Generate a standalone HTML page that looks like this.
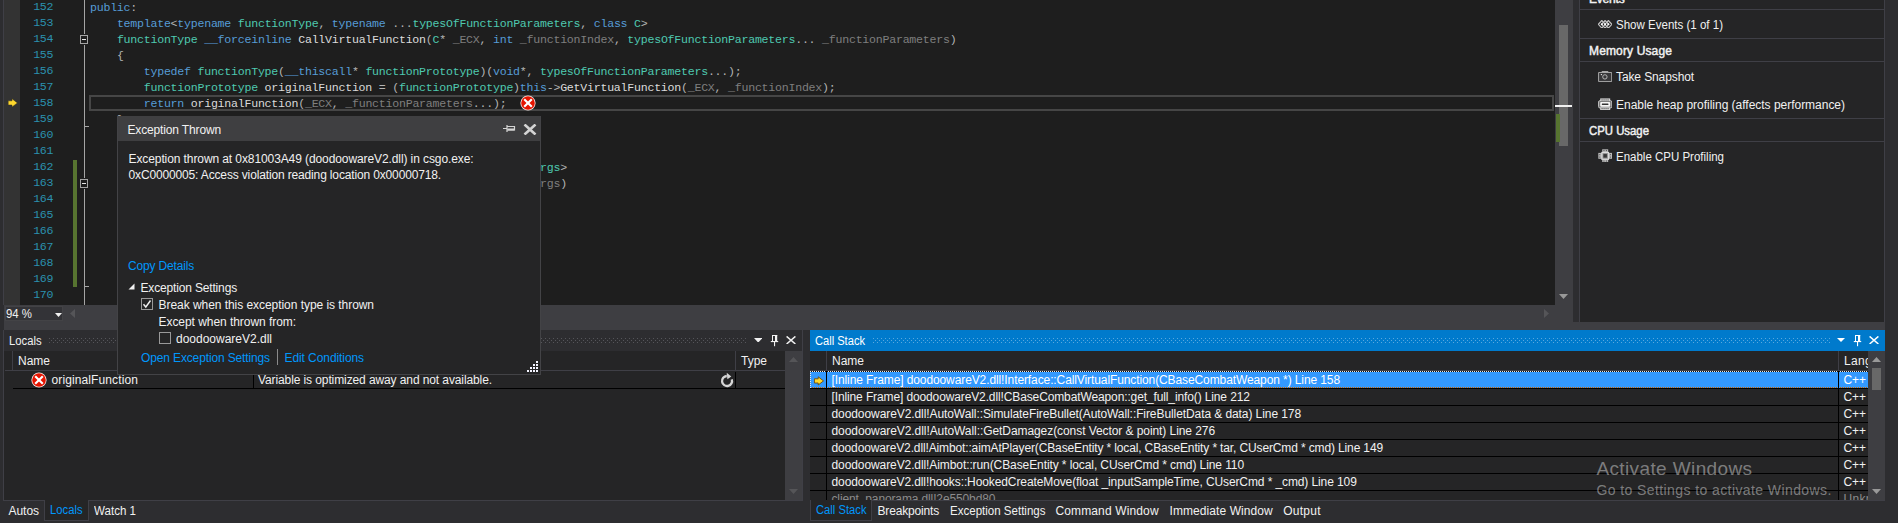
<!DOCTYPE html>
<html lang="en">
<head>
<meta charset="utf-8">
<title>Visual Studio - Exception Thrown</title>
<style>
html,body{margin:0;padding:0}
body{width:1898px;height:523px;overflow:hidden;background:#2d2d30;position:relative;font-family:"Liberation Sans", sans-serif;font-size:12px;color:#f1f1f1;-webkit-font-smoothing:antialiased}
div,span,svg{position:absolute;box-sizing:border-box}
.t{white-space:pre;line-height:1;height:1em}
.b{-webkit-text-stroke:.45px #f1f1f1}
#editor{left:4px;top:0;width:1551px;height:305px;background:#1e1e1e;overflow:hidden}
#margin{left:0;top:0;width:16px;height:305px;background:#333333}
.ln{left:0;width:49.3px;text-align:right;color:#2b91af;font-family:"Liberation Mono", monospace;font-size:11.6px;line-height:16px;height:16px;white-space:pre;letter-spacing:-0.2425px}
.cl{left:86px;font-family:"Liberation Mono", monospace;font-size:11.6px;line-height:16px;height:16px;white-space:pre;color:#dcdcdc;letter-spacing:-0.2425px}
.cl span{position:static}
.k{color:#569cd6}.y{color:#4ec9b0}.p{color:#7f7f7f}.o{color:#b4b4b4}.v{color:#dadada}
.sep{background:#3f3f46;height:1px}
.bl{background:#000}
.csrow{left:0;height:17px;width:1058px}
</style>
</head>
<body>
<div id="editor">
<div id="margin"></div>
<div style="left:69px;top:160px;width:4px;height:127px;background:#577430"></div>
<div style="left:80px;top:0;width:1px;height:305px;background:#a5a5a5"></div>
<div style="left:80px;top:126px;width:5px;height:1px;background:#a5a5a5"></div>
<div style="left:80px;top:286px;width:5px;height:1px;background:#a5a5a5"></div>
<div style="left:75.9px;top:34.0px;width:8.4px;height:11.2px;background:#1e1e1e"></div><div style="left:75.9px;top:35px;width:8.4px;height:9.2px;border:1px solid #a5a5a5;background:#1e1e1e"><div style="left:1.2px;top:3px;width:4px;height:1.2px;background:#e6e6e6"></div></div>
<div style="left:75.9px;top:178.0px;width:8.4px;height:11.2px;background:#1e1e1e"></div><div style="left:75.9px;top:179px;width:8.4px;height:9.2px;border:1px solid #a5a5a5;background:#1e1e1e"><div style="left:1.2px;top:3px;width:4px;height:1.2px;background:#e6e6e6"></div></div>
<div style="left:85px;top:95px;width:1465px;height:16px;border:2px solid #464646"></div>
<div class="ln" style="top:-1px">152</div><div class="cl" style="top:0px"><span class="k">public</span><span class="o">:</span></div>
<div class="ln" style="top:15px">153</div><div class="cl" style="top:16px">    <span class="k">template</span><span class="o">&lt;</span><span class="k">typename</span> <span class="y">functionType</span><span class="o">,</span> <span class="k">typename</span> <span class="o">...</span><span class="y">typesOfFunctionParameters</span><span class="o">,</span> <span class="k">class</span> <span class="y">C</span><span class="o">&gt;</span></div>
<div class="ln" style="top:31px">154</div><div class="cl" style="top:32px">    <span class="y">functionType</span> <span class="k">__forceinline</span> CallVirtualFunction<span class="o">(</span><span class="y">C</span><span class="o">*</span> <span class="p">_ECX</span><span class="o">,</span> <span class="k">int</span> <span class="p">_functionIndex</span><span class="o">,</span> <span class="y">typesOfFunctionParameters</span><span class="o">...</span> <span class="p">_functionParameters</span><span class="o">)</span></div>
<div class="ln" style="top:47px">155</div><div class="cl" style="top:48px">    <span class="o">{</span></div>
<div class="ln" style="top:63px">156</div><div class="cl" style="top:64px">        <span class="k">typedef</span> <span class="y">functionType</span><span class="o">(</span><span class="k">__thiscall</span><span class="o">*</span> <span class="y">functionPrototype</span><span class="o">)(</span><span class="k">void</span><span class="o">*,</span> <span class="y">typesOfFunctionParameters</span><span class="o">...);</span></div>
<div class="ln" style="top:79px">157</div><div class="cl" style="top:80px">        <span class="y">functionPrototype</span> <span class="v">originalFunction</span> <span class="o">=</span> <span class="o">(</span><span class="y">functionPrototype</span><span class="o">)</span><span class="k">this</span><span class="o">-&gt;</span>GetVirtualFunction<span class="o">(</span><span class="p">_ECX</span><span class="o">,</span> <span class="p">_functionIndex</span><span class="o">);</span></div>
<div class="ln" style="top:95px">158</div><div class="cl" style="top:96px">        <span class="k">return</span> <span class="v">originalFunction</span><span class="o">(</span><span class="p">_ECX</span><span class="o">,</span> <span class="p">_functionParameters</span><span class="o">...);</span></div>
<div class="ln" style="top:111px">159</div><div class="cl" style="top:112px">    <span class="o">}</span></div>
<div class="ln" style="top:127px">160</div>
<div class="ln" style="top:143px">161</div>
<div class="ln" style="top:159px">162</div><div class="cl" style="top:160px">    <span class="k">template</span><span class="o">&lt;</span><span class="k">typename</span> <span class="y">functionType</span><span class="o">,</span> <span class="k">class</span> <span class="y">C</span><span class="o">,</span> <span class="k">typename</span> <span class="o">...</span><span class="y">typesOfMyArgs</span><span class="o">&gt;</span></div>
<div class="ln" style="top:175px">163</div><div class="cl" style="top:176px">    <span class="y">functionType</span> CallVirtualFunctionEx<span class="o">(</span><span class="y">C</span><span class="o">*</span> <span class="p">_ECX</span><span class="o">,</span> <span class="y">typesOfMyArgs</span><span class="o">...</span> <span class="p">_args</span><span class="o">)</span></div>
<div class="ln" style="top:191px">164</div><div class="cl" style="top:192px">    <span class="o">{</span></div>
<div class="ln" style="top:207px">165</div>
<div class="ln" style="top:223px">166</div>
<div class="ln" style="top:239px">167</div>
<div class="ln" style="top:255px">168</div>
<div class="ln" style="top:271px">169</div><div class="cl" style="top:272px">    <span class="o">}</span></div>
<div class="ln" style="top:287px">170</div>
<svg style="left:3.8px;top:98px" width="10" height="10" viewBox="0 0 10 10"><path d="M0.2 2.8H4V0.7L9.4 4.9L4 9.1V7H0.2Z" fill="#ffd82e" stroke="#3a3620" stroke-width=".5"/></svg>
<svg style="left:516px;top:95.2px" width="16" height="16" viewBox="0 0 16 16"><circle cx="8" cy="8" r="7.6" fill="#f8ecea"/><circle cx="8" cy="8" r="6.8" fill="#e51400"/><path d="M4.2 4.2L11.8 11.8M11.8 4.2L4.2 11.8" stroke="#ffffff" stroke-width="2.1" fill="none"/></svg>
</div>
<div style="left:3px;top:0;width:1px;height:305px;background:#3f3f46"></div>
<div id="vscroll" style="left:1555px;top:0;width:18px;height:305px;background:#3e3e42"><div style="left:4px;top:25px;width:9px;height:121px;background:#686868"></div><div style="left:1px;top:114px;width:4px;height:28px;background:#577430"></div><div style="left:0;top:105px;width:17px;height:2px;background:#f0f0f0"></div><svg style="left:4px;top:294px" width="9" height="5" viewBox="0 0 9 5"><path d="M0 0H9L4.5 5Z" fill="#999"/></svg></div>
<div id="hscroll" style="left:4px;top:305px;width:1569px;height:17px;background:#3e3e42"><div style="left:1px;top:1px;width:58px;height:15px;background:#333337;border:1px solid #434346"></div><svg style="left:51px;top:8px" width="7" height="4" viewBox="0 0 7 4"><path d="M0 0H7L3.5 4Z" fill="#f1f1f1"/></svg><svg style="left:66px;top:4px" width="5" height="9" viewBox="0 0 5 9"><path d="M5 0V9L0 4.5Z" fill="#555558"/></svg><svg style="left:1540px;top:4px" width="5" height="9" viewBox="0 0 5 9"><path d="M0 0V9L5 4.5Z" fill="#555558"/></svg></div>
<div style="left:4px;top:322px;width:1881px;height:8px;background:#3e3e42"></div>
<div id="diag" style="left:1579px;top:0;width:306px;height:322px;background:#252526;border-left:1px solid #3f3f46;border-right:1px solid #3f3f46"><div class="sep" style="left:0;top:9px;width:305px"></div><div class="sep" style="left:0;top:38px;width:305px"></div><div class="sep" style="left:0;top:61px;width:305px"></div><div class="sep" style="left:0;top:118px;width:305px"></div><div class="sep" style="left:0;top:141px;width:305px"></div></div>
<svg style="left:1597.7px;top:19.6px" width="14.2" height="8.6" viewBox="0 0 14.2 8.6" fill="none" stroke="#c4c4c4" stroke-width="1.2"><path d="M0.3 4.3L3.8 0.5L7.3 4.3L3.8 8.1Z"/><path d="M3.6 4.3L7.1 0.5L10.6 4.3L7.1 8.1Z"/><path d="M6.9 4.3L10.4 0.5L13.9 4.3L10.4 8.1Z"/><circle cx="3.8" cy="4.3" r="1" fill="#ffffff" stroke="none"/><circle cx="7.1" cy="4.3" r="1" fill="#ffffff" stroke="none"/><circle cx="10.4" cy="4.3" r="1" fill="#ffffff" stroke="none"/></svg>
<svg style="left:1597.8px;top:70.6px" width="14.4" height="11.4" viewBox="0 0 14.4 11.4" fill="none" stroke="#a9a9a9" stroke-width="1"><path d="M0.6 1.5H13.7V10.6H0.6Z" fill="#38383a"/><path d="M4 1.5V0.5H10V1.5"/><circle cx="6.9" cy="5.9" r="2.2" stroke="#b4b4b4"/><circle cx="3.4" cy="3.6" r="0.7" fill="#f0f0f0" stroke="none"/></svg>
<svg style="left:1597.9px;top:97.7px" width="14.4" height="12.5" viewBox="0 0 14.4 12.5"><rect x="0.6" y="2.7" width="13.2" height="7.2" rx="1.2" fill="#707070" stroke="#c8c8c8" stroke-width="1"/><rect x="2.2" y="0.4" width="10" height="2.6" fill="#d4d4d4"/><rect x="2.2" y="9.5" width="10" height="2.6" fill="#d4d4d4"/><g fill="#3c3c3c"><rect x="3.6" y="1.3" width="0.9" height="1.3"/><rect x="3.6" y="9.9" width="0.9" height="1.3"/><rect x="5.6" y="1.3" width="0.9" height="1.3"/><rect x="5.6" y="9.9" width="0.9" height="1.3"/><rect x="7.6" y="1.3" width="0.9" height="1.3"/><rect x="7.6" y="9.9" width="0.9" height="1.3"/><rect x="9.6" y="1.3" width="0.9" height="1.3"/><rect x="9.6" y="9.9" width="0.9" height="1.3"/></g><rect x="2.2" y="3.9" width="10" height="4.8" rx="0.9" fill="#f6f6f6"/><rect x="3.8" y="5.6" width="6.7" height="1.4" rx="0.4" fill="#333333"/></svg>
<svg style="left:1597.9px;top:148.8px" width="14.4" height="13.6" viewBox="0 0 14.4 13.6"><g fill="#b9b9b9"><rect x="4.2" y="0.3" width="6" height="3"/><rect x="4.2" y="10.4" width="6" height="2.9"/><rect x="0.3" y="3.9" width="3.6" height="5.9"/><rect x="10.5" y="3.9" width="3.6" height="5.9"/></g><g fill="#4a4a4a"><rect x="5.4" y="1.2" width="1.1" height="0.9"/><rect x="7.9" y="1.2" width="1.1" height="0.9"/><rect x="5.4" y="11.6" width="1.1" height="0.9"/><rect x="7.9" y="11.6" width="1.1" height="0.9"/><rect x="1.3" y="5.2" width="1" height="1"/><rect x="1.3" y="7.6" width="1" height="1"/><rect x="11.9" y="5.2" width="1" height="1"/><rect x="11.9" y="7.6" width="1" height="1"/></g><rect x="3.3" y="2.9" width="7.8" height="8" fill="#dcdcdc"/><rect x="4.5" y="4.1" width="5.4" height="5.6" fill="#8e8e8e"/><rect x="5.4" y="5.1" width="3.5" height="3.5" fill="#363636"/></svg>
<div id="locals" style="left:3px;top:330px;width:800px;height:171px;background:#252526;border-left:1px solid #3f3f46;border-right:1px solid #3f3f46;border-bottom:1px solid #3f3f46">
<div style="left:0;top:0;width:798px;height:21px;background:#2d2d30"></div><svg style="left:45px;top:8px" width="697" height="5" shape-rendering="crispEdges"><defs><pattern id="g1" width="4" height="4" patternUnits="userSpaceOnUse"><rect x="0" y="0" width="1" height="1" fill="#55555a"/><rect x="2" y="2" width="1" height="1" fill="#55555a"/></pattern></defs><rect width="697" height="5" fill="url(#g1)"/></svg><svg style="left:749.7px;top:7.8px" width="8.4" height="4.6" viewBox="0 0 9 5" preserveAspectRatio="none"><path d="M0 0H9L4.5 5Z" fill="#f1f1f1"/></svg><svg style="left:766px;top:5px" width="9" height="12" viewBox="0 0 9 12" fill="#f1f1f1"><rect x="2" y="0" width="1" height="6"/><rect x="2" y="0" width="5.2" height="1"/><rect x="5" y="0" width="2.2" height="6"/><rect x="0.8" y="6" width="7.4" height="1.1"/><rect x="4" y="7" width="1.1" height="4.2"/></svg><svg style="left:782px;top:6px" width="10" height="8.4" viewBox="0 0 10 8.4"><path d="M0.6 0.4L9.4 8M9.4 0.4L0.6 8" stroke="#f1f1f1" stroke-width="1.5" fill="none"/></svg><div style="left:8px;top:21px;width:1px;height:19px;background:#3f3f46"></div><div style="left:731px;top:21px;width:1px;height:19px;background:#3f3f46"></div><div class="sep" style="left:1px;top:40px;width:780px"></div><div class="bl" style="left:9px;top:58px;width:772px;height:1px"></div><div class="bl" style="left:249px;top:42px;width:1px;height:16px"></div><div class="bl" style="left:731px;top:42px;width:1px;height:16px"></div><svg style="left:716px;top:42px" width="14" height="16" viewBox="0 0 14 16"><path d="M11.75 7.3A5 5 0 1 1 6.8 4" fill="none" stroke="#d6d6d6" stroke-width="2.3"/><path d="M6.7 0.7L11.3 4.4L7.4 7.2Z" fill="#d6d6d6"/></svg><div style="left:781px;top:21px;width:17px;height:149px;background:#3e3e42"><svg style="left:4px;top:6px" width="9" height="5" viewBox="0 0 9 5"><path d="M0 5H9L4.5 0Z" fill="#555558"/></svg><svg style="left:4px;top:138px" width="9" height="5" viewBox="0 0 9 5"><path d="M0 0H9L4.5 5Z" fill="#555558"/></svg></div></div>
<svg style="left:30.9px;top:371.8px" width="16" height="16" viewBox="0 0 16 16"><circle cx="8" cy="8" r="7.6" fill="#f8ecea"/><circle cx="8" cy="8" r="6.8" fill="#e51400"/><path d="M4.2 4.2L11.8 11.8M11.8 4.2L4.2 11.8" stroke="#ffffff" stroke-width="2.1" fill="none"/></svg>
<div style="left:44px;top:500px;width:45px;height:21px;background:#252526;border:1px solid #3f3f46;border-top:none"></div>
<div class="sep" style="left:89px;top:500px;width:714px"></div>
<div id="callstack" style="left:810px;top:330px;width:1075px;height:170px;background:#252526;overflow:hidden">
<div style="left:0;top:0;width:1075px;height:21px;background:#007acc"></div><svg style="left:63px;top:8px" width="958" height="5" shape-rendering="crispEdges"><defs><pattern id="g2" width="4" height="4" patternUnits="userSpaceOnUse"><rect x="0" y="0" width="1" height="1" fill="#59a8de"/><rect x="2" y="2" width="1" height="1" fill="#59a8de"/></pattern></defs><rect width="958" height="5" fill="url(#g2)"/></svg><svg style="left:1027px;top:8px" width="8" height="4" viewBox="0 0 8 4"><path d="M0 0H8L4 4Z" fill="#fff"/></svg><svg style="left:1043px;top:5px" width="9" height="12" viewBox="0 0 9 12" fill="#ffffff"><rect x="2" y="0" width="1" height="6"/><rect x="2" y="0" width="5.2" height="1"/><rect x="5" y="0" width="2.2" height="6"/><rect x="0.8" y="6" width="7.4" height="1.1"/><rect x="4" y="7" width="1.1" height="4.2"/></svg><svg style="left:1059px;top:6px" width="10" height="8.4" viewBox="0 0 10 8.4"><path d="M0.6 0.4L9.4 8M9.4 0.4L0.6 8" stroke="#ffffff" stroke-width="1.5" fill="none"/></svg><div style="left:16px;top:21px;width:1px;height:19px;background:#3f3f46"></div><div style="left:1028px;top:21px;width:1px;height:19px;background:#3f3f46"></div><div class="sep" style="left:0;top:40px;width:1058px"></div><div class="csrow" style="top:41px;background:#3399ff"></div><div style="left:0;top:41px;width:1058px;height:1px;background:repeating-linear-gradient(90deg,#e8e8e8 0 1px,#101010 1px 2px)"></div><div style="left:0;top:57px;width:1058px;height:1px;background:repeating-linear-gradient(90deg,#cc6600 0 1px,#3399ff 1px 2px)"></div><div style="left:0;top:41px;width:1px;height:17px;background:repeating-linear-gradient(180deg,#e8e8e8 0 1px,#3399ff 1px 2px)"></div><div class="bl" style="left:0;top:58px;width:1058px;height:1px"></div><div class="bl" style="left:0;top:75px;width:1058px;height:1px"></div><div class="bl" style="left:0;top:92px;width:1058px;height:1px"></div><div class="bl" style="left:0;top:109px;width:1058px;height:1px"></div><div class="bl" style="left:0;top:126px;width:1058px;height:1px"></div><div class="bl" style="left:0;top:143px;width:1058px;height:1px"></div><div class="bl" style="left:0;top:160px;width:1058px;height:1px"></div><div class="bl" style="left:0;top:177px;width:1058px;height:1px"></div><div class="bl" style="left:16px;top:41px;width:1px;height:130px"></div><div class="bl" style="left:1028px;top:41px;width:1px;height:130px"></div><svg style="left:4.2px;top:45.6px" width="10" height="10" viewBox="0 0 10 10"><path d="M0.4 2.8H4.2V0.8L9.5 4.9L4.2 9V7H0.4Z" fill="#ffd82e" stroke="#6a4a10" stroke-width=".9"/></svg><div style="left:1058px;top:21px;width:17px;height:149px;background:#3e3e42"><svg style="left:4px;top:6px" width="9" height="5" viewBox="0 0 9 5"><path d="M0 5H9L4.5 0Z" fill="#999"/></svg><div style="left:4px;top:17px;width:9px;height:22px;background:#686868"></div><svg style="left:4px;top:138px" width="9" height="5" viewBox="0 0 9 5"><path d="M0 0H9L4.5 5Z" fill="#999"/></svg></div></div>
<div class="sep" style="left:810px;top:499.5px;width:1075px"></div>
<div style="left:810px;top:500px;width:62px;height:21px;background:#252526;border:1px solid #3f3f46;border-top:none"></div>
<div id="cstext" style="left:810px;top:371px;width:1058px;height:128.5px;overflow:hidden">
<span class="t" id="cs0" style="left:21.5px;top:2.84px;color:#ffffff;letter-spacing:-0.1016px">[Inline Frame] doodoowareV2.dll!Interface::CallVirtualFunction(CBaseCombatWeapon *) Line 158</span>
<span class="t" id="cl0" style="left:1033.5px;top:2.84px;color:#ffffff;letter-spacing:-0.0625px">C++</span>
<span class="t" id="cs1" style="left:21.5px;top:19.84px;color:#f1f1f1;letter-spacing:-0.1210px">[Inline Frame] doodoowareV2.dll!CBaseCombatWeapon::get_full_info() Line 212</span>
<span class="t" id="cl1" style="left:1033.5px;top:19.84px;color:#f1f1f1;letter-spacing:-0.0625px">C++</span>
<span class="t" id="cs2" style="left:21.5px;top:36.84px;color:#f1f1f1;letter-spacing:-0.0826px">doodoowareV2.dll!AutoWall::SimulateFireBullet(AutoWall::FireBulletData &amp; data) Line 178</span>
<span class="t" id="cl2" style="left:1033.5px;top:36.84px;color:#f1f1f1;letter-spacing:-0.0625px">C++</span>
<span class="t" id="cs3" style="left:21.5px;top:53.84px;color:#f1f1f1;letter-spacing:-0.0728px">doodoowareV2.dll!AutoWall::GetDamagez(const Vector &amp; point) Line 276</span>
<span class="t" id="cl3" style="left:1033.5px;top:53.84px;color:#f1f1f1;letter-spacing:-0.0625px">C++</span>
<span class="t" id="cs4" style="left:21.5px;top:70.84px;color:#f1f1f1;letter-spacing:-0.1329px">doodoowareV2.dll!Aimbot::aimAtPlayer(CBaseEntity * local, CBaseEntity * tar, CUserCmd * cmd) Line 149</span>
<span class="t" id="cl4" style="left:1033.5px;top:70.84px;color:#f1f1f1;letter-spacing:-0.0625px">C++</span>
<span class="t" id="cs5" style="left:21.5px;top:87.84px;color:#f1f1f1;letter-spacing:-0.0921px">doodoowareV2.dll!Aimbot::run(CBaseEntity * local, CUserCmd * cmd) Line 110</span>
<span class="t" id="cl5" style="left:1033.5px;top:87.84px;color:#f1f1f1;letter-spacing:-0.0625px">C++</span>
<span class="t" id="cs6" style="left:21.5px;top:104.84px;color:#f1f1f1;letter-spacing:-0.1033px">doodoowareV2.dll!hooks::HookedCreateMove(float _inputSampleTime, CUserCmd * _cmd) Line 109</span>
<span class="t" id="cl6" style="left:1033.5px;top:104.84px;color:#f1f1f1;letter-spacing:-0.0625px">C++</span>
<span class="t" id="cs7" style="left:21.5px;top:121.84px;color:#8c8c8c;letter-spacing:-0.1265px">client_panorama.dll!2e550bd80</span>
<span class="t" id="cl7" style="left:1033.5px;top:121.84px;color:#8c8c8c;letter-spacing:0.3000px">Unkn</span>
<span class="t" id="clh" style="left:1034px;top:0.00px;letter-spacing:0.0000px"></span></div>
<div style="left:1843px;top:351px;width:25px;height:19px;overflow:hidden"><span class="t" id="lang" style="left:1px;top:3.84px;letter-spacing:0.3000px">Language</span></div>
<div id="popup" style="left:117px;top:116px;width:424px;height:259px;background:#252526;border:1px solid #434346;border-top:none"><div style="left:0;top:0;width:422px;height:25px;background:#3f3f41"></div></div>
<svg style="left:503px;top:124px" width="13" height="9" viewBox="0 0 13 9"><path d="M0 4.5H4M4 1V8M4.5 2.5H11.5V6H4.5" fill="none" stroke="#d4d4d4" stroke-width="1.2"/><path d="M4.5 5.5H11.5" stroke="#d4d4d4" stroke-width="2"/></svg>
<svg style="left:523px;top:124px" width="14" height="11" viewBox="0 0 14 11"><path d="M1.5 0.5L12.5 10.5M12.5 0.5L1.5 10.5" stroke="#d4d4d4" stroke-width="2.6" fill="none"/></svg>
<svg style="left:128.3px;top:283.4px" width="7" height="7" viewBox="0 0 7 7"><path d="M6.5 0.5V6.5H0.5Z" fill="#f1f1f1"/></svg>
<div style="left:141px;top:298px;width:12px;height:12px;border:1px solid #999;background:#252526"></div>
<svg style="left:142px;top:299px" width="10" height="10" viewBox="0 0 10 10"><path d="M1.5 5.2L3.8 8L8.5 1.5" fill="none" stroke="#f1f1f1" stroke-width="1.4"/></svg>
<div style="left:159px;top:332px;width:12px;height:12px;border:1px solid #999;background:#252526"></div>
<div style="left:276.5px;top:349px;width:1.5px;height:16px;background:#8a8a8a"></div>
<svg style="left:527px;top:361px" width="11" height="11" viewBox="0 0 11 11" fill="#f4f4ff"><rect x="9" y="0" width="2" height="2"/><rect x="9" y="3" width="2" height="2"/><rect x="6" y="3" width="2" height="2"/><rect x="9" y="6" width="2" height="2"/><rect x="6" y="6" width="2" height="2"/><rect x="3" y="6" width="2" height="2"/><rect x="9" y="9" width="2" height="2"/><rect x="6" y="9" width="2" height="2"/><rect x="3" y="9" width="2" height="2"/><rect x="0" y="9" width="2" height="2"/></svg>
<span class="t" id="pt" style="left:127.50px;top:123.84px;color:#f1f1f1;font-size:12px;letter-spacing:-0.1465px">Exception Thrown</span>
<span class="t" id="p1" style="left:128.50px;top:152.84px;color:#f1f1f1;font-size:12px;letter-spacing:-0.0950px">Exception thrown at 0x81003A49 (doodoowareV2.dll) in csgo.exe:</span>
<span class="t" id="p2" style="left:128.50px;top:168.84px;color:#f1f1f1;font-size:12px;letter-spacing:-0.1475px">0xC0000005: Access violation reading location 0x00000718.</span>
<span class="t" id="p3" style="left:128.00px;top:259.84px;color:#0097fb;font-size:12px;letter-spacing:-0.1693px">Copy Details</span>
<span class="t" id="p4" style="left:140.50px;top:281.84px;color:#f1f1f1;font-size:12px;letter-spacing:-0.1615px">Exception Settings</span>
<span class="t" id="p5" style="left:158.50px;top:298.84px;color:#f1f1f1;font-size:12px;letter-spacing:-0.0488px">Break when this exception type is thrown</span>
<span class="t" id="p6" style="left:158.50px;top:315.84px;color:#f1f1f1;font-size:12px;letter-spacing:-0.0514px">Except when thrown from:</span>
<span class="t" id="p7" style="left:176.00px;top:332.84px;color:#f1f1f1;font-size:12px;letter-spacing:-0.0049px">doodoowareV2.dll</span>
<span class="t" id="p8" style="left:141.00px;top:351.84px;color:#0097fb;font-size:12px;letter-spacing:-0.1345px">Open Exception Settings</span>
<span class="t" id="p9" style="left:284.50px;top:351.84px;color:#0097fb;font-size:12px;letter-spacing:-0.0813px">Edit Conditions</span>
<span class="t" id="z1" style="left:6.00px;top:307.84px;color:#f1f1f1;font-size:12px;transform:scaleX(0.9503);transform-origin:0 0">94 %</span>
<span class="t" id="l1" style="left:8.50px;top:334.84px;color:#f1f1f1;font-size:12px;transform:scaleX(0.9369);transform-origin:0 0">Locals</span>
<span class="t" id="l2" style="left:18.00px;top:354.84px;color:#f1f1f1;font-size:12px;letter-spacing:-0.0039px">Name</span>
<span class="t" id="l3" style="left:741.00px;top:354.84px;color:#f1f1f1;font-size:12px;letter-spacing:-0.0039px">Type</span>
<span class="t" id="l4" style="left:51.50px;top:373.84px;color:#f1f1f1;font-size:12px;letter-spacing:0.1113px">originalFunction</span>
<span class="t" id="l5" style="left:258.00px;top:373.84px;color:#f1f1f1;font-size:12px;letter-spacing:-0.1021px">Variable is optimized away and not available.</span>
<span class="t" id="t1" style="left:8.50px;top:504.84px;color:#f1f1f1;font-size:12px;letter-spacing:-0.0375px">Autos</span>
<span class="t" id="t2" style="left:50.00px;top:503.84px;color:#0097fb;font-size:12px;transform:scaleX(0.9369);transform-origin:0 0">Locals</span>
<span class="t" id="t3" style="left:94.00px;top:504.84px;color:#f1f1f1;font-size:12px;transform:scaleX(0.9638);transform-origin:0 0">Watch 1</span>
<span class="t" id="c0" style="left:815.00px;top:334.84px;color:#ffffff;font-size:12px;transform:scaleX(0.9254);transform-origin:0 0">Call Stack</span>
<span class="t" id="c1" style="left:832.00px;top:354.84px;color:#f1f1f1;font-size:12px;letter-spacing:-0.0039px">Name</span>
<span class="t" id="t4" style="left:815.50px;top:503.84px;color:#0097fb;font-size:12px;transform:scaleX(0.9346);transform-origin:0 0">Call Stack</span>
<span class="t" id="t5" style="left:877.50px;top:504.84px;color:#f1f1f1;font-size:12px;letter-spacing:-0.1705px">Breakpoints</span>
<span class="t" id="t6" style="left:949.50px;top:504.84px;color:#f1f1f1;font-size:12px;transform:scaleX(0.9607);transform-origin:0 0">Exception Settings</span>
<span class="t" id="t7" style="left:1055.40px;top:504.84px;color:#f1f1f1;font-size:12px;letter-spacing:0.1375px">Command Window</span>
<span class="t" id="t8" style="left:1169.50px;top:504.84px;color:#f1f1f1;font-size:12px;letter-spacing:0.0783px">Immediate Window</span>
<span class="t" id="t9" style="left:1283.30px;top:504.84px;color:#f1f1f1;font-size:12px;letter-spacing:0.2281px">Output</span>
<span class="t b" id="r0" style="left:1589.00px;top:-7.16px;color:#f1f1f1;font-size:12px;letter-spacing:-0.1979px">Events</span>
<span class="t" id="r1" style="left:1616.00px;top:18.84px;color:#f1f1f1;font-size:12px;transform:scaleX(0.9606);transform-origin:0 0">Show Events (1 of 1)</span>
<span class="t b" id="r2" style="left:1589.00px;top:44.84px;color:#f1f1f1;font-size:12px;letter-spacing:0.1367px">Memory Usage</span>
<span class="t" id="r3" style="left:1616.00px;top:70.84px;color:#f1f1f1;font-size:12px;letter-spacing:-0.1070px">Take Snapshot</span>
<span class="t" id="r4" style="left:1616.00px;top:98.84px;color:#f1f1f1;font-size:12px;letter-spacing:-0.0214px">Enable heap profiling (affects performance)</span>
<span class="t b" id="r5" style="left:1589.00px;top:124.84px;color:#f1f1f1;font-size:12px;transform:scaleX(0.9470);transform-origin:0 0">CPU Usage</span>
<span class="t" id="r6" style="left:1616.00px;top:150.84px;color:#f1f1f1;font-size:12px;transform:scaleX(0.9580);transform-origin:0 0">Enable CPU Profiling</span>
<span class="t" id="w1" style="left:1596.40px;top:458.92px;color:rgba(255,255,255,.41);font-size:19px;letter-spacing:0.3842px">Activate Windows</span>
<span class="t" id="w2" style="left:1596.40px;top:483.15px;color:rgba(255,255,255,.41);font-size:14px;letter-spacing:0.4114px">Go to Settings to activate Windows.</span>
</body>
</html>
